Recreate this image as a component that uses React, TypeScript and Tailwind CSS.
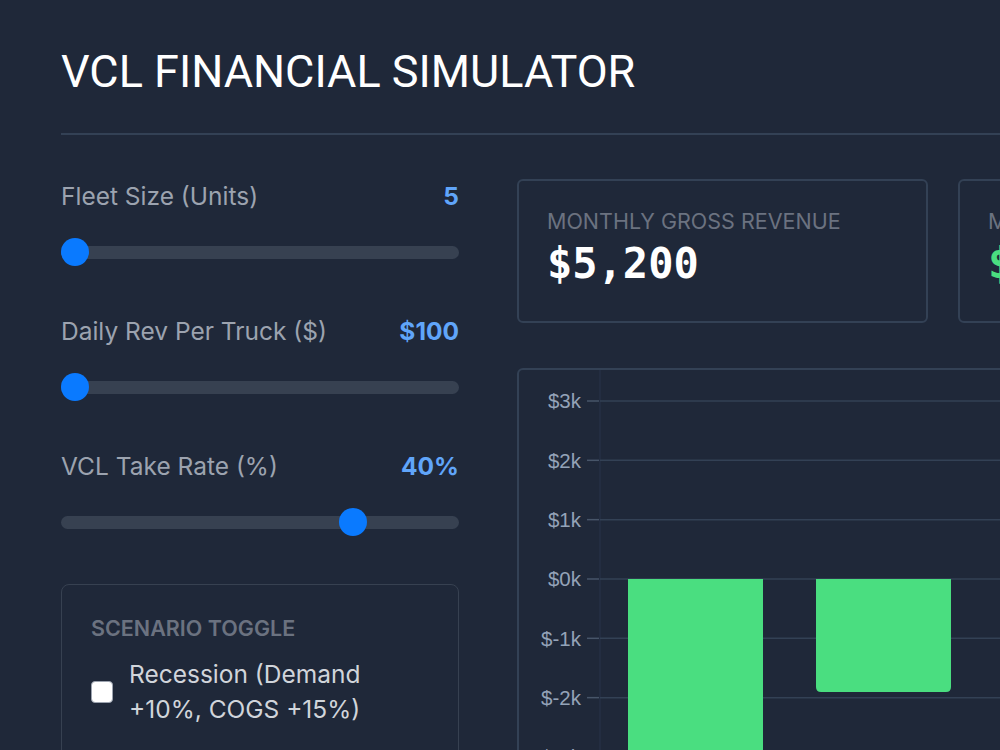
const sliders = [
  { label: "Fleet Size (Units)", value: "5", pct: 0 },
  { label: "Daily Rev Per Truck ($)", value: "$100", pct: 0 },
  { label: "VCL Take Rate (%)", value: "40%", pct: 0.75 },
]

const ticks = [3, 2, 1, 0, -1, -2, -3]
const STEP = 59.33
const ZERO = 209

function Slider({ label, value, pct }: { label: string; value: string; pct: number }) {
  return (
    <div className="mb-[48px]">
      <div className="flex justify-between h-[34px] leading-[34px] text-[24.5px]">
        <span className="text-[#9ca3af]">{label}</span>
        <span className="font-bold text-[#60a5fa]">{value}</span>
      </div>
      <div className="relative mt-[25px] h-[28px] flex items-center">
        <div className="w-full h-[13px] rounded-full bg-[#374151]" />
        <div
          className="absolute top-0 w-[28px] h-[28px] rounded-full bg-[#0a7aff]"
          style={{ left: `calc(${pct * 100}% - ${pct * 28}px)` }}
        />
      </div>
    </div>
  )
}

function Chart() {
  const barPath = (x: number, w: number, bottom: number) =>
    `M${x} ${ZERO} H${x + w} V${bottom - 5} Q${x + w} ${bottom} ${x + w - 5} ${bottom} H${x + 5} Q${x} ${bottom} ${x} ${bottom - 5} Z`
  return (
    <svg width="900" height="400" className="block">
      <line x1="81" y1="0" x2="81" y2="400" stroke="#28334a" strokeWidth="1" />
      {ticks.map((t, i) => {
        const y = 31 + i * STEP
        return (
          <g key={t}>
            <line x1="81" y1={y} x2="900" y2={y} stroke="#334155" strokeWidth="1.5" />
            <line x1="68" y1={y} x2="80" y2={y} stroke="#475569" strokeWidth="1.5" />
            <text
              x="62"
              y={y}
              dy="0.36em"
              textAnchor="end"
              fill="#94a3b8"
              fontSize="20.5"
              fontFamily="'Liberation Sans', Arial, sans-serif"
            >
              {`$${t}k`}
            </text>
          </g>
        )
      })}
      <path d={barPath(109, 135, 420)} fill="#4ade80" />
      <path d={barPath(297, 135, 322)} fill="#4ade80" />
      <path d={barPath(485, 135, 380)} fill="#4ade80" />
    </svg>
  )
}

export default function App() {
  return (
    <div className="w-[1000px] h-[750px] overflow-hidden bg-[#1f2839] font-['Inter',sans-serif]">
      <div className="pl-[61px] pt-[44px] w-[1400px]">
        <h1 className="text-[45px] leading-[56px] text-white font-['Roboto',sans-serif]">
          VCL FINANCIAL SIMULATOR
        </h1>
        <div className="mt-[33px] h-[2px] bg-[#334155]" />
        <div className="flex gap-[58px] mt-[44px]">
          <div className="w-[398px] shrink-0">
            {sliders.map((s) => (
              <Slider key={s.label} {...s} />
            ))}
            <div className="border border-[#374151] rounded-lg px-[29px] pt-[29px] pb-[30px]">
              <div className="text-[21.5px] leading-[28px] font-semibold text-[#6b7280]">
                SCENARIO TOGGLE
              </div>
              <label className="mt-[15px] flex items-center gap-[16px]">
                <span className="w-[22px] h-[22px] shrink-0 rounded-[4px] bg-white border border-[#9ca3af]" />
                <span className="max-w-[270px] text-[24.5px] leading-[35px] text-[#d1d5db]">
                  Recession (Demand +10%, COGS +15%)
                </span>
              </label>
            </div>
          </div>
          <div className="flex-1">
            <div className="flex gap-[30px]">
              <div className="w-[411px] h-[144px] shrink-0 border-2 border-[#334155] rounded-md px-[28px] pt-[27px]">
                <div className="text-[21.5px] leading-[26px] text-[#6b7280]">MONTHLY GROSS REVENUE</div>
                <div className="mt-[8px] text-[42px] leading-[44px] font-bold text-white font-['DejaVu_Sans_Mono',monospace]">
                  $5,200
                </div>
              </div>
              <div className="w-[411px] h-[144px] shrink-0 border-2 border-[#334155] rounded-md px-[28px] pt-[27px]">
                <div className="text-[21.5px] leading-[26px] text-[#6b7280]">MONTHLY NET PROFIT</div>
                <div className="mt-[8px] text-[42px] leading-[44px] font-bold text-[#4ade80] font-['DejaVu_Sans_Mono',monospace]">
                  $2,080
                </div>
              </div>
            </div>
            <div className="mt-[45px] w-[852px] h-[500px] border-2 border-[#334155] rounded-md">
              <Chart />
            </div>
          </div>
        </div>
      </div>
    </div>
  )
}
